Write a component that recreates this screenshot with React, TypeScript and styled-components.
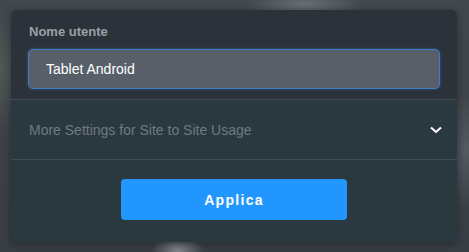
import React, { useState } from "react";
import styled, { createGlobalStyle } from "styled-components";

const GlobalStyle = createGlobalStyle`
  html, body {
    margin: 0;
    padding: 0;
  }
  body {
    width: 469px;
    height: 252px;
    overflow: hidden;
    font-family: "Liberation Sans", Arial, sans-serif;
    background-color: #3b4148;
    background-image:
      radial-gradient(ellipse 60px 14px at 305px 4px, rgba(150, 160, 168, 0.45), transparent),
      radial-gradient(ellipse 30px 60px at 0px 70px, rgba(95, 105, 95, 0.55), transparent),
      radial-gradient(ellipse 26px 14px at 178px 250px, rgba(190, 195, 200, 0.55), transparent),
      radial-gradient(ellipse 20px 60px at 466px 150px, rgba(110, 118, 125, 0.5), transparent),
      linear-gradient(180deg, #42484d 0%, #383e44 100%);
  }
`;

const Page = styled.div`
  padding: 10px 12px 10px 11px;
`;

const Panel = styled.div`
  width: 446px;
  border-radius: 6px;
  overflow: hidden;
  background: #2a3840;
  box-shadow: 0 2px 10px rgba(0, 0, 0, 0.35);
`;

const TopSection = styled.div`
  background: #2b323a;
  padding: 14px 17px 10px 17px;
  border-bottom: 1px solid #414b55;
`;

const Label = styled.div`
  font-size: 13px;
  font-weight: bold;
  color: #9aa1a8;
  line-height: 16px;
  margin-bottom: 9px;
  padding-left: 1px;
`;

const Input = styled.input`
  box-sizing: border-box;
  width: 412px;
  height: 40px;
  padding: 0 17px;
  font-family: "Liberation Sans", Arial, sans-serif;
  font-size: 14px;
  color: #ffffff;
  background: #585f69;
  border: 1px solid #3f7dc4;
  border-radius: 5px;
  box-shadow: 0 0 3px rgba(60, 130, 220, 0.55);
  outline: none;
`;

const Collapse = styled.button`
  display: flex;
  align-items: center;
  justify-content: space-between;
  box-sizing: content-box;
  width: calc(100% - 33px);
  height: 59px;
  padding: 0 15px 0 18px;
  background: transparent;
  border: none;
  border-bottom: 1px solid #414d56;
  font-family: "Liberation Sans", Arial, sans-serif;
  font-size: 14px;
  color: #6f7a83;
  cursor: pointer;
  text-align: left;
`;

const Footer = styled.div`
  display: flex;
  justify-content: center;
  padding: 19px 0 22px;
`;

const ApplyButton = styled.button`
  width: 226px;
  height: 41px;
  border: none;
  border-radius: 4px;
  background: #2196ff;
  color: #ffffff;
  font-family: "Liberation Sans", Arial, sans-serif;
  font-size: 14px;
  font-weight: bold;
  letter-spacing: 1.3px;
  cursor: pointer;
`;

const Chevron = () => (
  <svg width="12" height="8" viewBox="0 0 12 8">
    <path d="M1 1.5 L6 6 L11 1.5" fill="none" stroke="#ffffff" strokeWidth="2" />
  </svg>
);

const App = () => {
  const [name, setName] = useState("Tablet Android");

  return (
    <Page>
      <GlobalStyle />
      <Panel>
        <TopSection>
          <Label>Nome utente</Label>
          <Input value={name} onChange={(e) => setName(e.target.value)} />
        </TopSection>
        <Collapse>
          <span>More Settings for Site to Site Usage</span>
          <Chevron />
        </Collapse>
        <Footer>
          <ApplyButton>Applica</ApplyButton>
        </Footer>
      </Panel>
    </Page>
  );
};

export default App;
